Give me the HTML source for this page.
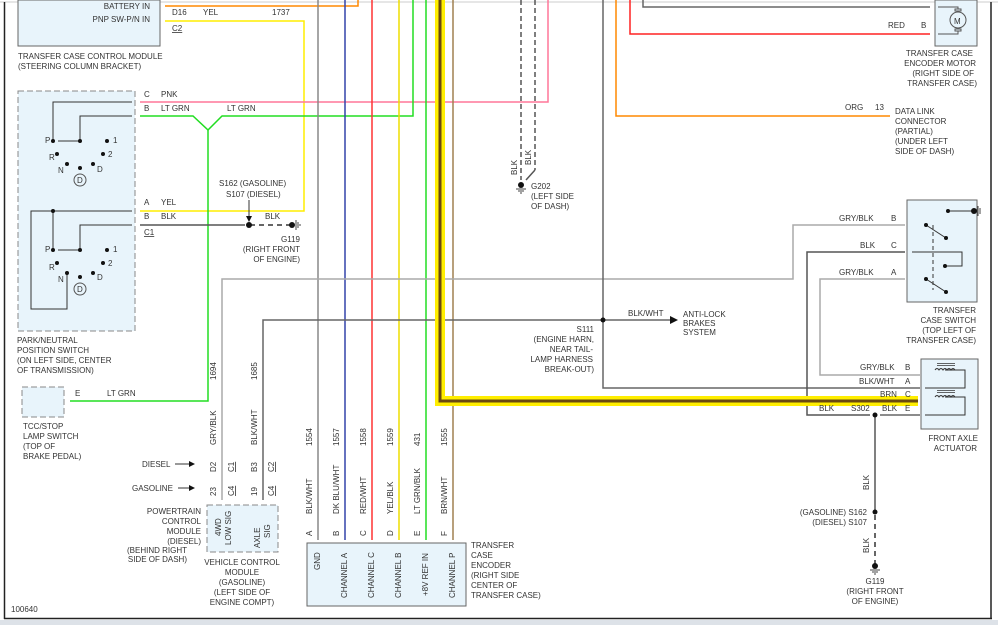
<!DOCTYPE html>
<html><head><meta charset="utf-8"><style>
html,body{margin:0;padding:0;background:#fff;}
svg{display:block;}
text{font-family:"Liberation Sans",sans-serif;font-size:8px;fill:#333;}
</style></head><body>
<svg width="998" height="625" viewBox="0 0 998 625" xmlns="http://www.w3.org/2000/svg">
<rect x="0" y="0" width="998" height="625" fill="#fff"/>
<rect x="0" y="620" width="998" height="5" fill="#dde2e8"/>
<line x1="0" y1="2" x2="998" y2="2" stroke="#ccc" stroke-width="1"/>
<line x1="4.5" y1="2" x2="4.5" y2="619" stroke="#222" stroke-width="1.5"/>
<line x1="991" y1="2" x2="991" y2="619" stroke="#222" stroke-width="1.5"/>
<line x1="4" y1="618.5" x2="992" y2="618.5" stroke="#222" stroke-width="1.5"/>

<rect x="18" y="0" width="142" height="46" fill="#e8f4fb" stroke="#666"/>
<rect x="18" y="91" width="117" height="240" fill="#e8f4fb" stroke="#888" stroke-dasharray="6,3"/>
<rect x="22" y="387" width="42" height="30" fill="#e8f4fb" stroke="#888" stroke-dasharray="6,3"/>
<rect x="207" y="505" width="71" height="47" fill="#e8f4fb" stroke="#888" stroke-dasharray="6,3"/>
<rect x="307" y="543" width="159" height="63" fill="#e8f4fb" stroke="#666"/>
<rect x="935" y="0" width="42" height="46" fill="#e8f4fb" stroke="#666"/>
<rect x="907" y="200" width="70" height="102" fill="#e8f4fb" stroke="#666"/>
<rect x="921" y="359" width="57" height="70" fill="#e8f4fb" stroke="#666"/>

<g fill="none" stroke-width="1.5">
<polyline points="165,6 358,6 358,0" stroke="#ff8800"/>
<polyline points="165,21 304,21 304,211 140,211" stroke="#ffee00"/>
<polyline points="140,102 548,102 548,0" stroke="#ff7799"/>
<polyline points="140,116 193,116 208,130 222,116 413,116 413,0" stroke="#22dd22"/>
<polyline points="208,130 208,401 70,401" stroke="#22dd22"/>
<line x1="318" y1="0" x2="318" y2="540" stroke="#888"/>
<line x1="345" y1="0" x2="345" y2="540" stroke="#3344aa"/>
<line x1="372" y1="0" x2="372" y2="540" stroke="#ff3333"/>
<line x1="399" y1="0" x2="399" y2="540" stroke="#eedd00"/>
<line x1="426" y1="0" x2="426" y2="540" stroke="#22dd22"/>
<line x1="453" y1="0" x2="453" y2="540" stroke="#a08050"/>
<line x1="140" y1="225" x2="245" y2="225" stroke="#555"/>
<line x1="250" y1="225" x2="292" y2="225" stroke="#333" stroke-dasharray="5,4"/>
<polyline points="222,500 222,279 793,279 793,225 905,225" stroke="#aaa"/>
<polyline points="263,500 263,320 603,320 603,388 920,388" stroke="#666"/>
<line x1="603" y1="0" x2="603" y2="320" stroke="#666"/>
<line x1="603" y1="320" x2="670" y2="320" stroke="#666"/>
<polyline points="905,252 807,252 807,415 870,415" stroke="#555"/>
<line x1="880" y1="415" x2="920" y2="415" stroke="#666"/>
<polyline points="905,279 820,279 820,375 920,375" stroke="#aaa"/>
<polyline points="930,7 643,7 643,0" stroke="#666"/>
<polyline points="930,34 630,34 630,0" stroke="#ff2222"/>
<polyline points="890,116 616,116 616,0" stroke="#ff8800"/>
<line x1="521" y1="0" x2="521" y2="180" stroke="#555" stroke-dasharray="5,3"/>
<line x1="535" y1="0" x2="535" y2="170" stroke="#555" stroke-dasharray="5,3"/>
<line x1="535" y1="170" x2="526" y2="180" stroke="#555"/>
<line x1="875" y1="415" x2="875" y2="510" stroke="#555"/>
<line x1="875" y1="515" x2="875" y2="564" stroke="#333" stroke-dasharray="5,4"/>
<polyline points="440,0 440,401 918,401" stroke="#ffee00" stroke-width="10"/>
<polyline points="440,0 440,401 918,401" stroke="#6a4a10" stroke-width="3"/>
</g>

<g stroke="#333" stroke-width="1"><line x1="175" y1="464" x2="190" y2="464"/><line x1="178" y1="488" x2="190" y2="488"/><line x1="249" y1="200" x2="249" y2="218"/></g>
<g fill="#111"><polygon points="189,461 195,464 189,467"/><polygon points="189,485 195,488 189,491"/><polygon points="246,216 249,222 252,216"/></g>

<g stroke="#444" stroke-width="1">
<line x1="516" y1="189" x2="526" y2="189"/><line x1="518" y1="191" x2="524" y2="191"/><line x1="520" y1="193" x2="522" y2="193"/>
<line x1="870" y1="570" x2="880" y2="570"/><line x1="872" y1="572" x2="878" y2="572"/><line x1="874" y1="574" x2="876" y2="574"/>
<line x1="296" y1="220" x2="296" y2="230"/><line x1="298" y1="222" x2="298" y2="228"/><line x1="300" y1="224" x2="300" y2="226"/>
<line x1="978" y1="206" x2="978" y2="216"/><line x1="980" y1="208" x2="980" y2="214"/>
</g>

<g stroke="#333" fill="none" stroke-width="1">
<polyline points="132,102 53,102 53,141"/><polyline points="132,116 80,116 80,141 58,141"/>
<polyline points="132,211 31,211 31,309 67,309 67,273"/><line x1="53" y1="211" x2="53" y2="250"/>
<polyline points="132,225 80,225 80,250 58,250"/>
</g>
<g fill="#111">
<circle cx="53" cy="141" r="2"/><circle cx="80" cy="141" r="2"/><circle cx="107" cy="141" r="2"/><circle cx="57" cy="154" r="2"/><circle cx="103" cy="154" r="2"/><circle cx="67" cy="164" r="2"/><circle cx="80" cy="168" r="2"/><circle cx="93" cy="164" r="2"/>
<circle cx="53" cy="211" r="2"/><circle cx="53" cy="250" r="2"/><circle cx="80" cy="250" r="2"/><circle cx="107" cy="250" r="2"/><circle cx="57" cy="263" r="2"/><circle cx="103" cy="263" r="2"/><circle cx="67" cy="273" r="2"/><circle cx="80" cy="277" r="2"/><circle cx="93" cy="273" r="2"/>
<circle cx="249" cy="225" r="3"/><circle cx="292" cy="225" r="3"/><circle cx="603" cy="320" r="2.5"/><circle cx="875" cy="415" r="2.5"/><circle cx="875" cy="512" r="2.5"/><circle cx="875" cy="566" r="3"/><circle cx="521" cy="185" r="3"/>
<polygon points="670,316 678,320 670,324"/>
</g>
<g fill="none" stroke="#555"><circle cx="80" cy="180" r="6"/><circle cx="80" cy="289" r="6"/><circle cx="958" cy="20" r="8"/>
<rect x="955" y="9" width="6" height="2"/><rect x="955" y="29" width="6" height="2"/>
<polyline points="938,7 958,7 958,9"/><polyline points="938,34 958,34 958,31"/></g>
<g font-size="7px"><text x="45" y="143">P</text><text x="49" y="160">R</text><text x="58" y="173">N</text><text x="97" y="172">D</text><text x="113" y="143">1</text><text x="108" y="157">2</text><text x="77" y="183">D</text>
<text x="45" y="252">P</text><text x="49" y="270">R</text><text x="58" y="282">N</text><text x="97" y="280">D</text><text x="113" y="252">1</text><text x="108" y="266">2</text><text x="77" y="292">D</text></g>
<text x="954" y="24" font-size="10px" fill="#1a3fa0">M</text>

<g stroke="#333" fill="none" stroke-width="1"><line x1="926" y1="225" x2="946" y2="238"/><line x1="926" y1="279" x2="946" y2="292"/><polyline points="912,252 962,252 962,266 945,266"/><line x1="948" y1="211" x2="974" y2="211"/><line x1="933" y1="225" x2="933" y2="290" stroke-dasharray="4,3"/>
<polyline points="945,370 965,370 965,388 925,388"/><polyline points="945,397 965,397 965,415 925,415"/>
<path d="M935,370 q2,-3 4,0 q2,-3 4,0 q2,-3 4,0 q2,-3 4,0 q2,-3 4,0"/><path d="M935,397 q2,-3 4,0 q2,-3 4,0 q2,-3 4,0 q2,-3 4,0 q2,-3 4,0"/>
<line x1="937" y1="363.5" x2="955" y2="363.5" stroke-width="0.7"/><line x1="937" y1="365.5" x2="955" y2="365.5" stroke-width="0.7"/><line x1="937" y1="390.5" x2="955" y2="390.5" stroke-width="0.7"/><line x1="937" y1="392.5" x2="955" y2="392.5" stroke-width="0.7"/></g>
<g fill="#111"><circle cx="926" cy="225" r="2"/><circle cx="946" cy="238" r="2"/><circle cx="926" cy="279" r="2"/><circle cx="946" cy="292" r="2"/><circle cx="945" cy="266" r="2"/><circle cx="948" cy="211" r="2"/><circle cx="974" cy="211" r="3"/></g>

<text x="150" y="9" text-anchor="end">BATTERY IN</text><text x="150" y="22" text-anchor="end">PNP SW-P/N IN</text>
<text x="172" y="15">D16</text><text x="203" y="15">YEL</text><text x="272" y="15">1737</text><text x="172" y="31" text-decoration="underline">C2</text>
<text x="18" y="59">TRANSFER CASE CONTROL MODULE</text><text x="18" y="69">(STEERING COLUMN BRACKET)</text>
<text x="144" y="97">C</text><text x="161" y="97">PNK</text><text x="144" y="111">B</text><text x="161" y="111">LT GRN</text><text x="227" y="111">LT GRN</text>
<text x="144" y="205">A</text><text x="161" y="205">YEL</text><text x="144" y="219">B</text><text x="161" y="219">BLK</text><text x="144" y="235" text-decoration="underline">C1</text>
<text x="219" y="186">S162 (GASOLINE)</text><text x="226" y="197">S107 (DIESEL)</text><text x="265" y="219">BLK</text>
<text x="300" y="242" text-anchor="end">G119</text><text x="300" y="252" text-anchor="end">(RIGHT FRONT</text><text x="300" y="262" text-anchor="end">OF ENGINE)</text>
<text x="17" y="343">PARK/NEUTRAL</text><text x="17" y="353">POSITION SWITCH</text><text x="17" y="363">(ON LEFT SIDE, CENTER</text><text x="17" y="373">OF TRANSMISSION)</text>
<text x="75" y="396">E</text><text x="107" y="396">LT GRN</text>
<text x="23" y="429">TCC/STOP</text><text x="23" y="439">LAMP SWITCH</text><text x="23" y="449">(TOP OF</text><text x="23" y="459">BRAKE PEDAL)</text>
<text x="142" y="467">DIESEL</text><text x="132" y="491">GASOLINE</text>
<text x="201" y="514" text-anchor="end">POWERTRAIN</text><text x="201" y="524" text-anchor="end">CONTROL</text><text x="201" y="534" text-anchor="end">MODULE</text><text x="201" y="544" text-anchor="end">(DIESEL)</text><text x="187" y="553" text-anchor="end">(BEHIND RIGHT</text><text x="187" y="562" text-anchor="end">SIDE OF DASH)</text>
<text x="242" y="565" text-anchor="middle">VEHICLE CONTROL</text><text x="242" y="575" text-anchor="middle">MODULE</text><text x="242" y="585" text-anchor="middle">(GASOLINE)</text><text x="242" y="595" text-anchor="middle">(LEFT SIDE OF</text><text x="242" y="605" text-anchor="middle">ENGINE COMPT)</text>
<text x="11" y="612">100640</text>
<text x="471" y="548">TRANSFER</text><text x="471" y="558">CASE</text><text x="471" y="568">ENCODER</text><text x="471" y="578">(RIGHT SIDE</text><text x="471" y="588">CENTER OF</text><text x="471" y="598">TRANSFER CASE)</text>
<g font-size="7.5px">
<text transform="translate(216,380) rotate(-90)">1694</text><text transform="translate(216,445) rotate(-90)">GRY/BLK</text>
<text transform="translate(257,380) rotate(-90)">1685</text><text transform="translate(257,445) rotate(-90)">BLK/WHT</text>
<text transform="translate(216,472) rotate(-90)">D2</text><text transform="translate(234,472) rotate(-90)" text-decoration="underline">C1</text>
<text transform="translate(257,472) rotate(-90)">B3</text><text transform="translate(274,472) rotate(-90)" text-decoration="underline">C2</text>
<text transform="translate(216,496) rotate(-90)">23</text><text transform="translate(234,496) rotate(-90)" text-decoration="underline">C4</text>
<text transform="translate(257,496) rotate(-90)">19</text><text transform="translate(274,496) rotate(-90)" text-decoration="underline">C4</text>
<text transform="translate(221,536) rotate(-90)">4WD</text><text transform="translate(231,545) rotate(-90)">LOW SIG</text>
<text transform="translate(260,548) rotate(-90)">AXLE</text><text transform="translate(270,538) rotate(-90)">SIG</text>
<text transform="translate(312,446) rotate(-90)">1554</text><text transform="translate(312,514) rotate(-90)">BLK/WHT</text><text transform="translate(312,536) rotate(-90)">A</text>
<text transform="translate(339,446) rotate(-90)">1557</text><text transform="translate(339,514) rotate(-90)">DK BLU/WHT</text><text transform="translate(339,536) rotate(-90)">B</text>
<text transform="translate(366,446) rotate(-90)">1558</text><text transform="translate(366,514) rotate(-90)">RED/WHT</text><text transform="translate(366,536) rotate(-90)">C</text>
<text transform="translate(393,446) rotate(-90)">1559</text><text transform="translate(393,514) rotate(-90)">YEL/BLK</text><text transform="translate(393,536) rotate(-90)">D</text>
<text transform="translate(420,446) rotate(-90)">431</text><text transform="translate(420,514) rotate(-90)">LT GRN/BLK</text><text transform="translate(420,536) rotate(-90)">E</text>
<text transform="translate(447,446) rotate(-90)">1555</text><text transform="translate(447,514) rotate(-90)">BRN/WHT</text><text transform="translate(447,536) rotate(-90)">F</text>
<text transform="translate(320,570) rotate(-90)">GND</text><text transform="translate(347,598) rotate(-90)">CHANNEL A</text><text transform="translate(374,598) rotate(-90)">CHANNEL C</text><text transform="translate(401,598) rotate(-90)">CHANNEL B</text><text transform="translate(428,596) rotate(-90)">+8V REF IN</text><text transform="translate(455,598) rotate(-90)">CHANNEL P</text>
<text transform="translate(517,175) rotate(-90)">BLK</text><text transform="translate(531,165) rotate(-90)">BLK</text>
<text transform="translate(869,490) rotate(-90)">BLK</text><text transform="translate(869,553) rotate(-90)">BLK</text>
</g>
<text x="531" y="189">G202</text><text x="531" y="199">(LEFT SIDE</text><text x="531" y="209">OF DASH)</text>
<text x="888" y="28">RED</text><text x="921" y="28">B</text>
<text x="973" y="56" text-anchor="end">TRANSFER CASE</text><text x="976" y="66" text-anchor="end">ENCODER MOTOR</text><text x="974" y="76" text-anchor="end">(RIGHT SIDE OF</text><text x="977" y="86" text-anchor="end">TRANSFER CASE)</text>
<text x="845" y="110">ORG</text><text x="875" y="110">13</text>
<text x="895" y="114">DATA LINK</text><text x="895" y="124">CONNECTOR</text><text x="895" y="134">(PARTIAL)</text><text x="895" y="144">(UNDER LEFT</text><text x="895" y="154">SIDE OF DASH)</text>
<text x="839" y="221">GRY/BLK</text><text x="891" y="221">B</text><text x="860" y="248">BLK</text><text x="891" y="248">C</text><text x="839" y="275">GRY/BLK</text><text x="891" y="275">A</text>
<text x="976" y="313" text-anchor="end">TRANSFER</text><text x="976" y="323" text-anchor="end">CASE SWITCH</text><text x="976" y="333" text-anchor="end">(TOP LEFT OF</text><text x="976" y="343" text-anchor="end">TRANSFER CASE)</text>
<text x="628" y="316">BLK/WHT</text><text x="683" y="317">ANTI-LOCK</text><text x="683" y="326">BRAKES</text><text x="683" y="335">SYSTEM</text>
<text x="594" y="332" text-anchor="end">S111</text><text x="594" y="342" text-anchor="end">(ENGINE HARN,</text><text x="593" y="352" text-anchor="end">NEAR TAIL-</text><text x="593" y="362" text-anchor="end">LAMP HARNESS</text><text x="594" y="372" text-anchor="end">BREAK-OUT)</text>
<text x="860" y="370">GRY/BLK</text><text x="905" y="370">B</text><text x="859" y="384">BLK/WHT</text><text x="905" y="384">A</text><text x="880" y="397">BRN</text><text x="905" y="397">C</text>
<text x="819" y="411">BLK</text><text x="851" y="411">S302</text><text x="882" y="411">BLK</text><text x="905" y="411">E</text>
<text x="978" y="441" text-anchor="end">FRONT AXLE</text><text x="977" y="451" text-anchor="end">ACTUATOR</text>
<text x="867" y="515" text-anchor="end">(GASOLINE) S162</text><text x="867" y="525" text-anchor="end">(DIESEL) S107</text>
<text x="875" y="584" text-anchor="middle">G119</text><text x="875" y="594" text-anchor="middle">(RIGHT FRONT</text><text x="875" y="604" text-anchor="middle">OF ENGINE)</text>
</svg>
</body></html>
